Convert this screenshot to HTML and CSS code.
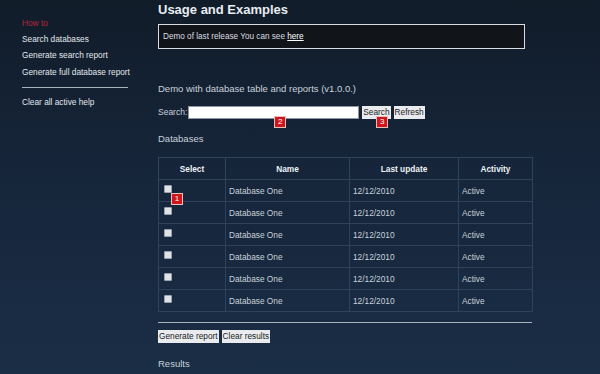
FILE: index.html
```html
<!DOCTYPE html>
<html>
<head>
<meta charset="utf-8">
<link rel="stylesheet" href="styles.css">
</head>
<body>
<div class="page">
  <aside class="side">
    <ul class="menu">
      <li class="active">How to</li>
      <li>Search databases</li>
      <li>Generate search report</li>
      <li>Generate full database report</li>
    </ul>
    <hr class="side-rule">
    <div class="menu-item">Clear all active help</div>
  </aside>
  <main class="main">
    <h1 class="title">Usage and Examples</h1>
    <div class="notice">Demo of last release You can see <a href="#">here</a></div>
    <p class="demo">Demo with database table and reports (v1.0.0.)</p>
    <div class="search">
      <label class="search-label">Search:</label>
      <span class="field-wrap"><input class="field" type="text"><span class="badge b2">2</span></span>
      <span class="btn-wrap"><button class="btn">Search</button><span class="badge b3">3</span></span>
      <button class="btn">Refresh</button>
    </div>
    <p class="section">Databases</p>
    <table class="grid">
      <thead>
        <tr><th class="c1">Select</th><th class="c2">Name</th><th class="c3">Last update</th><th class="c4">Activity</th></tr>
      </thead>
      <tbody>
        <tr><td class="chk"><span class="box"></span><span class="badge b1">1</span></td><td>Database One</td><td>12/12/2010</td><td>Active</td></tr>
        <tr><td class="chk"><span class="box"></span></td><td>Database One</td><td>12/12/2010</td><td>Active</td></tr>
        <tr><td class="chk"><span class="box"></span></td><td>Database One</td><td>12/12/2010</td><td>Active</td></tr>
        <tr><td class="chk"><span class="box"></span></td><td>Database One</td><td>12/12/2010</td><td>Active</td></tr>
        <tr><td class="chk"><span class="box"></span></td><td>Database One</td><td>12/12/2010</td><td>Active</td></tr>
        <tr><td class="chk"><span class="box"></span></td><td>Database One</td><td>12/12/2010</td><td>Active</td></tr>
      </tbody>
    </table>
    <hr class="main-rule">
    <div class="actions"><button class="btn">Generate report</button><button class="btn">Clear results</button></div>
    <p class="section results">Results</p>
  </main>
</div>
</body>
</html>
```
FILE: styles.css
```css
html, body { margin: 0; padding: 0; }
body {
  width: 600px; height: 374px; overflow: hidden;
  background: linear-gradient(to bottom, #111c29 0%, #16253a 45%, #1a2e46 100%);
  font-family: "Liberation Sans", Arial, sans-serif;
  color: #d6dde4;
}
.page { display: flex; }
.side { width: 136px; padding: 15px 0 0 22px; flex: none; }
.menu { list-style: none; margin: 0; padding: 0; }
.menu li, .menu-item { font-size: 8.3px; line-height: 16.2px; color: #e2e7ec; white-space: nowrap; }
.menu li.active { color: #b3263a; }
.side-rule { width: 106px; margin: 7px 0 6px 0; border: 0; border-top: 1px solid #a9b3bd; height: 0; }
.main { width: 375px; }
.title { margin: 1px 0 0 0; font-size: 13px; line-height: 17px; font-weight: bold; color: #e8edf2; }
.notice {
  margin-top: 6px; height: 23px; width: 361px; box-sizing: content-box;
  background: #111419; border: 1px solid #d9dde2;
  font-size: 8.2px; line-height: 23px; padding-left: 4px; color: #d9dde2;
}
.notice a { color: #ffffff; text-decoration: underline; }
.demo { margin: 33px 0 0 0; font-size: 9.5px; line-height: 13px; color: #c9d1da; }
.search { margin-top: 10px; display: flex; align-items: center; height: 14px; font-size: 8.5px; }
.search-label { color: #c9d1da; margin-right: 1px; }
.field-wrap, .btn-wrap { position: relative; display: inline-block; }
.field { width: 169px; height: 11px; padding: 0; margin: 0; border: 1px solid #8e96a0; background: #ffffff; display: block; }
.btn {
  font-family: "Liberation Sans", Arial, sans-serif; font-size: 8.3px; line-height: 11px;
  padding: 1px 1px; margin: 0 0 0 3px; border: 0; background: #e9ebee; color: #222; height: 13px; display: block;
}
.badge {
  position: absolute; width: 10px; height: 10px; background: #d0161c; border: 1px solid #e8c0c0;
  color: #fff; font-size: 8px; line-height: 10px; text-align: center;
}
.b2 { left: 86px; top: 10px; }
.b3 { left: 17px; top: 10px; }
.section { margin: 13px 0 0 0; font-size: 9.5px; line-height: 13px; color: #c9d1da; }
.grid {
  margin-top: 12px; width: 375px; border-collapse: collapse; font-size: 8.3px;
  border: 1px solid #2e4259;
}
.grid th, .grid td { border: 1px solid #2e4259; height: 22px; padding: 0 3px; box-sizing: border-box; }
.grid th { color: #eef2f5; font-weight: bold; text-align: center; }
.grid td { color: #c9d1da; vertical-align: middle; }
.c1 { width: 67px; }
.c2 { width: 124px; }
.c3 { width: 109px; }
.grid td.chk { position: relative; vertical-align: top; padding: 0 3px; }
.box { display: block; width: 6px; height: 6px; background: #dfe3e8; border: 1px solid #9aa3ad; border-radius: 1px; margin: 5px 0 0 2px; }
.chk .b1 { top: 13px; left: 12px; }
.main-rule { margin: 10px 0 0 0; width: 374px; border: 0; border-top: 1px solid #a9b3bd; height: 0; }
.actions { display: flex; margin-top: 7px; }
.actions .btn:first-child { margin-left: 0; }
.results { margin-top: 14px; }
```
